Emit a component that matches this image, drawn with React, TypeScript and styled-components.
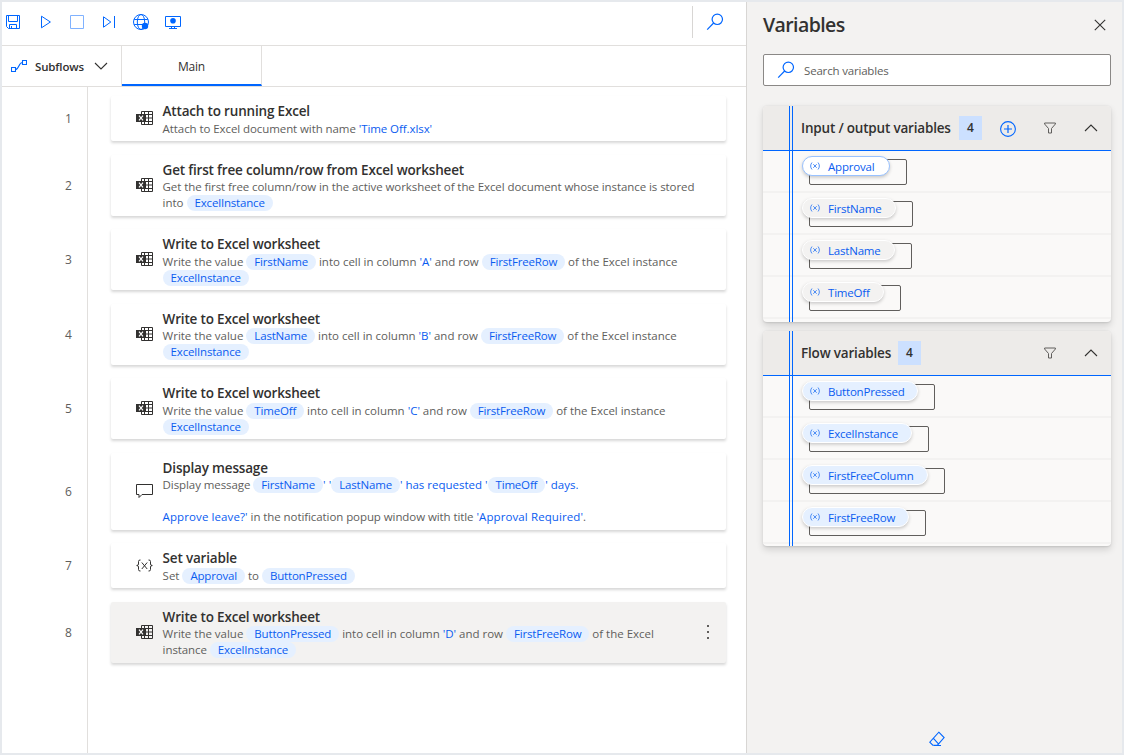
import React from "react";
import styled, { createGlobalStyle } from "styled-components";

const BLUE = "#0066ff";
const LINK = "#0a5cf0";
const INK = "#323130";
const MUTED = "#605e5c";
const LINE = "#e1dfdd";

const GlobalStyle = createGlobalStyle`
  *, *::before, *::after { box-sizing: border-box; }
  body { margin: 0; background: #fff; }
  svg { display: block; flex: none; }
`;

const Window = styled.div`
  display: flex;
  width: 1124px;
  height: 755px;
  border: 2px solid #e6e9ed;
  background: #fff;
  color: ${INK};
  font-family: "Open Sans", "Noto Sans", sans-serif;
  font-size: 11.5px;
  overflow: hidden;
`;

const Workspace = styled.main`
  display: flex;
  flex-direction: column;
  width: 744px;
`;

const Toolbar = styled.div`
  display: flex;
  align-items: center;
  height: 44px;
  padding: 0 22px 3px 3px;
  border-bottom: 1px solid ${LINE};
`;

const Tools = styled.div`
  display: flex;
  gap: 16px;
  flex: 1;
`;

const SearchTool = styled.div`
  display: flex;
  align-items: center;
  height: 32px;
  padding-left: 13px;
  border-left: 1px solid #d8d6d4;
`;

const TabBar = styled.div`
  display: flex;
  height: 41px;
  border-bottom: 1px solid ${LINE};
`;

const Subflows = styled.div`
  display: flex;
  align-items: center;
  width: 120px;
  padding-left: 9px;
  border-right: 1px solid ${LINE};
  font-weight: 600;
  letter-spacing: -0.15px;
  span { margin: 0 9px 0 8px; width: 50px; white-space: nowrap; }
`;

const Tab = styled.div`
  display: flex;
  align-items: center;
  justify-content: center;
  width: 140px;
  padding-top: 2px;
  border-right: 1px solid ${LINE};
  border-bottom: 2px solid ${BLUE};
  font-size: 12px;
  letter-spacing: -0.2px;
`;

const Flow = styled.div`
  display: flex;
  flex: 1;
  flex-direction: column;
  gap: 13.5px;
  padding-top: 9.4px;
  background: linear-gradient(${LINE}, ${LINE}) 85px 0 / 1px 100% no-repeat;
`;

const Step = styled.div<{ $lines: number }>`
  display: flex;
  align-items: center;
  height: ${(p) => 29 + p.$lines * 16}px;
`;

const StepNumber = styled.div`
  width: 109px;
  padding: 0.4px 0 0 63px;
  font-size: 12px;
  line-height: 16px;
  color: ${MUTED};
`;

const Card = styled.div<{ $selected?: boolean }>`
  display: flex;
  align-items: center;
  width: 615px;
  height: 100%;
  padding: 0 14px 0 25px;
  border-radius: 2px;
  background: ${(p) => (p.$selected ? "#f3f2f1" : "#fff")};
  box-shadow: 0 2px 3px -0.5px rgba(0, 0, 0, 0.16);
  > svg { margin-top: 0.4px; }
`;

const CardText = styled.div`
  flex: 1;
  align-self: flex-start;
  margin-left: 8.6px;
  padding-top: 6px;
`;

const CardTitle = styled.div`
  height: 18.2px;
  font-size: 13.5px;
  line-height: 18px;
  font-weight: 600;
  letter-spacing: -0.18px;
  white-space: nowrap;
`;

const Line = styled.div`
  height: 16px;
  line-height: 16px;
  color: ${MUTED};
  letter-spacing: -0.01px;
  white-space: pre;
`;

const Tight = styled.span`
  letter-spacing: -0.08px;
`;

const Pill = styled.span`
  display: inline-block;
  height: 16px;
  padding: 0 8px;
  border-radius: 8px;
  background: #e5f0ff;
  color: ${LINK};
  letter-spacing: -0.18px;
  vertical-align: top;
`;

const Literal = styled.span<{ $loose?: boolean }>`
  color: ${LINK};
  letter-spacing: ${(p) => (p.$loose ? "0.1px" : "inherit")};
`;

const Side = styled.aside`
  display: flex;
  flex-direction: column;
  width: 376px;
  padding: 0 11px 6px 16px;
  border-left: 1px solid #d8d6d4;
  background: #f3f2f1;
`;

const SideHeader = styled.div`
  display: flex;
  align-items: center;
  justify-content: space-between;
  height: 52px;
  padding: 0 5px 6px 0;
  h1 { margin: 0; padding-bottom: 2px; font-size: 19.5px; font-weight: 600; letter-spacing: -0.6px; }
`;

const SearchBox = styled.div`
  display: flex;
  align-items: center;
  gap: 9px;
  height: 32px;
  margin-bottom: 20px;
  padding-left: 13px;
  border: 1px solid #8a8886;
  border-radius: 2px;
  background: #fff;
  color: ${MUTED};
  letter-spacing: -0.18px;
`;

const Group = styled.section<{ $height: number }>`
  position: relative;
  height: ${(p) => p.$height}px;
  margin-bottom: 9px;
  border-radius: 4px;
  background: #faf9f8;
  box-shadow: 0 3.2px 7.2px rgba(0, 0, 0, 0.13), 0 0.6px 1.8px rgba(0, 0, 0, 0.1);

  /* double margin rule running over the header and the rows */
  &::after {
    content: "";
    position: absolute;
    top: 0;
    bottom: 0;
    left: 26px;
    width: 4px;
    border: solid ${BLUE};
    border-width: 0 1px;
  }
`;

const GroupHeader = styled.div`
  display: flex;
  align-items: center;
  height: 45px;
  padding: 0 13px 0 38px;
  border-bottom: 1px solid ${BLUE};
  border-radius: 4px 4px 0 0;
  background: #edebe9;
  font-size: 13.5px;
  font-weight: 600;
`;

const GroupTitle = styled.div<{ $width: number }>`
  width: ${(p) => p.$width}px;
  letter-spacing: -0.19px;
  white-space: nowrap;
`;

const Count = styled.div`
  width: 23px;
  margin-left: 8px;
  background: #cce0ff;
  font-size: 12px;
  line-height: 24px;
  text-align: center;
`;

const HeaderIcons = styled.div`
  display: flex;
  flex: 1;
  align-items: center;
  justify-content: flex-end;
`;

const IconGap = styled.div<{ $drop?: number }>`
  margin-right: 28px;
  padding-top: ${(p) => p.$drop ?? 0}px;
`;

const VariableRow = styled.div`
  height: 42px;
  padding: 8px 0 0 46px;
  border-bottom: 2px solid #f3f2f1;
`;

const ValueBox = styled.div<{ $width: number }>`
  width: ${(p) => p.$width + 10}px;
  height: 26px;
  border: 1px solid ${MUTED};
  border-radius: 2px;
`;

const tones = {
  active: { bg: "#fff", border: "#99c2ff" },
  io: { bg: "#f3f2f1", border: "#fff" },
  flow: { bg: "#e5f0ff", border: "#fff" },
};

const Chip = styled.div<{ $width: number; $tone: keyof typeof tones }>`
  display: flex;
  align-items: center;
  width: ${(p) => p.$width}px;
  height: 20px;
  margin: -4px 0 0 -8px;
  padding-left: 7px;
  border: 1px solid ${(p) => tones[p.$tone].border};
  border-radius: 10px;
  background: ${(p) => tones[p.$tone].bg};
  box-shadow: 0 1.6px 3.6px rgba(0, 0, 0, 0.2);
  color: ${LINK};
  letter-spacing: -0.2px;
  white-space: nowrap;
  span { margin-left: 8px; padding-top: 1px; }
`;

const Footer = styled.div`
  display: flex;
  flex: 1;
  align-items: flex-end;
  justify-content: center;
`;

const Icon = ({ w = 16, h = 16, color = BLUE, children }: { w?: number; h?: number; color?: string; children: React.ReactNode }) => (
  <svg width={w} height={h} viewBox={`0 0 ${w} ${h}`} fill="none" stroke={color} strokeWidth="1">
    {children}
  </svg>
);

const SaveIcon = () => (
  <Icon>
    <path d="M1.5 1.5h13v13h-11l-2-2zM3.5 1.5v6h9v-6M4.5 14.5v-4h7v4M6.5 12v2.5" />
  </Icon>
);
const PlayIcon = () => (
  <Icon><path d="M4.5 2.2v11.6L13.4 8z" /></Icon>
);
const StopIcon = () => (
  <Icon color="#80b2ff"><path d="M1.5 1.5h13v13h-13z" /></Icon>
);
const StepIcon = () => (
  <Icon><path d="M2.5 2.8v10.4L9.8 8zM13.5 2v12" /></Icon>
);
const GlobeIcon = () => (
  <Icon>
    <circle cx="8" cy="8" r="7.5" />
    <ellipse cx="8" cy="8" rx="3.7" ry="7.5" />
    <path d="M1.2 5.5h13.6M1.2 10.5h9" />
    <circle cx="12" cy="12" r="3.2" fill={BLUE} stroke="none" />
  </Icon>
);
const MonitorIcon = () => (
  <Icon>
    <path d="M.5 2.5h15v10H.5zM4 14.5h8M6.5 12.5v2M9.5 12.5v2" />
    <circle cx="8" cy="6.7" r="2.8" fill={BLUE} stroke="none" />
  </Icon>
);
const SearchIcon = () => (
  <Icon w={18} h={18}><circle cx="11.3" cy="6.3" r="5.2" strokeWidth="1.2" /><path d="M7.6 10L1.2 16.6" strokeWidth="1.2" /></Icon>
);
const SubflowIcon = () => (
  <Icon>
    <path d="M.5 9.5h4v4h-4zM11.5 2.5h4v4h-4zM4.5 11.5c3.5 0 3-7 7-7" strokeWidth="1.1" />
  </Icon>
);
const Chevron = ({ up }: { up?: boolean }) => (
  <Icon w={14} h={8} color={INK}><path d={up ? "M1 7l6-6 6 6" : "M1 1l6 6 6-6"} strokeWidth="1.1" /></Icon>
);
const CloseIcon = () => (
  <Icon w={12} h={12} color={INK}><path d="M.8.8l10.4 10.4M11.2.8L.8 11.2" strokeWidth="1.1" /></Icon>
);
const AddIcon = () => (
  <Icon><circle cx="8" cy="8" r="7.4" strokeWidth="1.1" /><path d="M8 4v8M4 8h8" strokeWidth="1.2" /></Icon>
);
const FilterIcon = () => (
  <Icon w={12} h={12} color={MUTED}><path d="M.6 1h10.8v1L7.5 6.5v4.5h-3V6.5L.6 2z" /></Icon>
);
const EraserIcon = () => (
  <Icon color={BLUE}>
    <path d="M9.8 1.2l5.3 5.3-6.6 7.7H3.8L.8 11.2zM4.2 7.2l5 5.4M5 14.5h7" strokeWidth="1.1" />
  </Icon>
);
const ExcelIcon = () => (
  <Icon w={18} h={16} color={INK}>
    <path d="M5.5 3.5V.5h11v13h-11V11M9 3.5h7.5M10 7h6.5M9 10.5h7.5M8.5.5v3M8.5 11v2.5M12.5.5v13" />
    <path d="M0 3h10v8H0z" fill={INK} stroke="none" />
    <path d="M3 4.7l4 4.6M7 4.7L3 9.3" stroke="#fff" strokeWidth="1.2" />
  </Icon>
);
const MessageIcon = () => (
  <Icon w={18} h={16} color={INK}><path d="M.5 .5h16v10H6l-3 3v-3H.5z" /></Icon>
);
const BracesIcon = () => (
  <Icon w={18} h={16} color={INK}>
    <path d="M4.5 2H4q-1.5 0-1.5 1.5V6q0 1.5-1.8 1.5q1.8 0 1.8 1.5v2.5q0 1.5 1.5 1.5h.5M12.5 2h.5q1.5 0 1.5 1.5V6q0 1.5 1.8 1.5q-1.8 0-1.8 1.5v2.5q0 1.5-1.5 1.5h-.5M5.8 4.5l5.400 6.500M11.200 4.500l-5.400 6.500" />
  </Icon>
);
const MoreIcon = () => (
  <Icon w={8} h={16}>
    {[0, 6, 12].map((y) => <path key={y} d={`M3 ${y}h2v2h-2z`} fill={MUTED} stroke="none" />)}
  </Icon>
);
const VarIcon = () => (
  <Icon w={10} h={8} color="#4d8df5">
    <path d="M2 .5C.2 2.5.2 5.5 2 7.5M8 .5c1.8 2 1.8 5 0 7M3.3 2.2l3.4 3.600M6.700 2.200L3.300 5.800" />
  </Icon>
);

type StepData = { title: string; icon: React.ReactNode; lines: React.ReactNode[]; selected?: boolean };

const writeStep = (value: string, column: string): StepData => ({
  title: "Write to Excel worksheet",
  icon: <ExcelIcon />,
  lines: [
    <>Write the value <Pill>{value}</Pill> into cell in column <Literal>'{column}'</Literal> and row <Pill>FirstFreeRow</Pill> of the Excel instance</>,
    <Pill>ExcelInstance</Pill>,
  ],
});

const steps: StepData[] = [
  {
    title: "Attach to running Excel",
    icon: <ExcelIcon />,
    lines: [<Tight>Attach to Excel document with name <Literal>'Time Off.xlsx'</Literal></Tight>],
  },
  {
    title: "Get first free column/row from Excel worksheet",
    icon: <ExcelIcon />,
    lines: [
      <Tight>Get the first free column/row in the active worksheet of the Excel document whose instance is stored</Tight>,
      <>into <Pill>ExcelInstance</Pill></>,
    ],
  },
  writeStep("FirstName", "A"),
  writeStep("LastName", "B"),
  writeStep("TimeOff", "C"),
  {
    title: "Display message",
    icon: <MessageIcon />,
    lines: [
      <><Tight>Display message </Tight><Pill>FirstName</Pill><Literal $loose>' '</Literal><Pill>LastName</Pill><Literal>' has requested '</Literal><Pill>TimeOff</Pill><Literal>' days.</Literal></>,
      "",
      <><Literal $loose>Approve leave?'</Literal><Tight> in the notification popup window with title </Tight><Literal $loose>'Approval Required'</Literal>.</>,
    ],
  },
  {
    title: "Set variable",
    icon: <BracesIcon />,
    lines: [<>Set <Pill>Approval</Pill> to <Pill>ButtonPressed</Pill></>],
  },
  {
    title: "Write to Excel worksheet",
    icon: <ExcelIcon />,
    selected: true,
    lines: [
      <>Write the value <Pill>ButtonPressed</Pill> into cell in column <Literal>'D'</Literal> and row <Pill>FirstFreeRow</Pill> of the Excel</>,
      <><Tight>instance </Tight><Pill>ExcelInstance</Pill></>,
    ],
  },
];

const Variable = ({ name, width, tone }: { name: string; width: number; tone: keyof typeof tones }) => (
  <VariableRow>
    <ValueBox $width={width}>
      <Chip $width={width} $tone={tone}>
        <VarIcon />
        <span>{name}</span>
      </Chip>
    </ValueBox>
  </VariableRow>
);

export default function App() {
  return (
    <>
      <GlobalStyle />
      <Window>
        <Workspace>
          <Toolbar>
            <Tools>
              <SaveIcon />
              <PlayIcon />
              <StopIcon />
              <StepIcon />
              <GlobeIcon />
              <MonitorIcon />
            </Tools>
            <SearchTool><SearchIcon /></SearchTool>
          </Toolbar>
          <TabBar>
            <Subflows>
              <SubflowIcon />
              <span>Subflows</span>
              <Chevron />
            </Subflows>
            <Tab>Main</Tab>
          </TabBar>
          <Flow>
            {steps.map((step, i) => (
              <Step key={i} $lines={step.lines.length}>
                <StepNumber>{i + 1}</StepNumber>
                <Card $selected={step.selected}>
                  {step.icon}
                  <CardText>
                    <CardTitle>{step.title}</CardTitle>
                    {step.lines.map((line, j) => <Line key={j}>{line}</Line>)}
                  </CardText>
                  {step.selected && <MoreIcon />}
                </Card>
              </Step>
            ))}
          </Flow>
        </Workspace>
        <Side>
          <SideHeader>
            <h1>Variables</h1>
            <CloseIcon />
          </SideHeader>
          <SearchBox>
            <SearchIcon />
            <span>Search variables</span>
          </SearchBox>
          <Group $height={216}>
            <GroupHeader>
              <GroupTitle $width={150}>Input / output variables</GroupTitle>
              <Count>4</Count>
              <HeaderIcons>
                <IconGap $drop={1}><AddIcon /></IconGap>
                <IconGap><FilterIcon /></IconGap>
                <Chevron up />
              </HeaderIcons>
            </GroupHeader>
            <Variable name="Approval" width={88} tone="active" />
            <Variable name="FirstName" width={94} tone="io" />
            <Variable name="LastName" width={93} tone="io" />
            <Variable name="TimeOff" width={82} tone="io" />
          </Group>
          <Group $height={215}>
            <GroupHeader>
              <GroupTitle $width={89}>Flow variables</GroupTitle>
              <Count>4</Count>
              <HeaderIcons>
                <IconGap><FilterIcon /></IconGap>
                <Chevron up />
              </HeaderIcons>
            </GroupHeader>
            <Variable name="ButtonPressed" width={116} tone="flow" />
            <Variable name="ExcelInstance" width={110} tone="flow" />
            <Variable name="FirstFreeColumn" width={126} tone="flow" />
            <Variable name="FirstFreeRow" width={107} tone="flow" />
          </Group>
          <Footer><EraserIcon /></Footer>
        </Side>
      </Window>
    </>
  );
}
